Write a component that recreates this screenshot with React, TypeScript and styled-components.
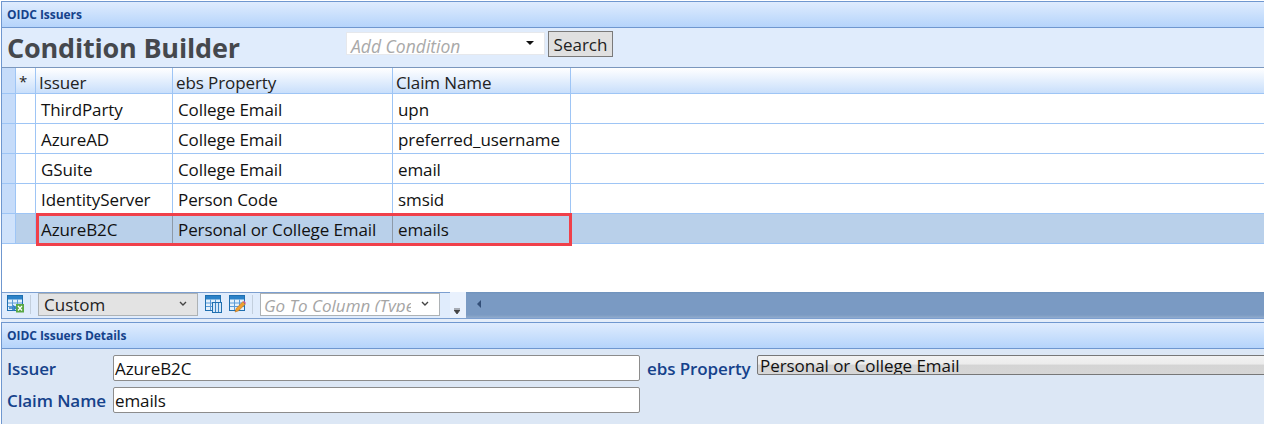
import React from "react";
import styled, { createGlobalStyle } from "styled-components";

const Global = createGlobalStyle`
  html, body { margin: 0; padding: 0; background: #fff; overflow: hidden; }
  * { box-sizing: border-box; }
  body { font-family: "Open Sans", "Noto Sans", sans-serif; }
`;

const Page = styled.div`
  width: 1264px;
  height: 424px;
  padding: 1px 0 0 1px;
  display: flex;
  flex-direction: column;
  overflow: hidden;
  background: #fff;
`;

const Upper = styled.section`
  height: 318px;
  flex: none;
  display: flex;
  flex-direction: column;
  border-top: 1px solid #6f97cf;
  border-left: 1px solid #6f97cf;
`;

const TitleBar = styled.div`
  height: 26px;
  flex: none;
  padding: 0 0 0 5px;
  display: flex;
  align-items: center;
  background: linear-gradient(#dfecfe, #b5d4fb);
  border-bottom: 1px solid #6f97cf;
  color: #15428b;
  font-size: 12px;
  font-weight: 700;
  letter-spacing: -0.05px;
`;

const BuilderBar = styled.div`
  height: 40px;
  flex: none;
  display: flex;
  align-items: flex-start;
  background: #e0ecfc;
  border-bottom: 1px solid #7b97bd;
`;

const BuilderTitle = styled.h1`
  width: 338px;
  margin: 0;
  padding: 2px 0 0 5px;
  color: #45484d;
  font-size: 27px;
  line-height: 36px;
  font-weight: 700;
  letter-spacing: -0.2px;
`;

const ConditionSelect = styled.div`
  width: 199px;
  height: 23px;
  margin: 4px 0 0 6px;
  padding: 0 0 0 4px;
  display: flex;
  justify-content: space-between;
  background: #fff;
  border: 1px solid #e6e8ec;
  color: #a9a9a9;
  font-size: 17.5px;
  font-style: italic;
  line-height: 27px;
  overflow: hidden;
`;

const Caret = styled.span`
  width: 0;
  height: 0;
  margin: 8px 10px 0 0;
  border-left: 4px solid transparent;
  border-right: 4px solid transparent;
  border-top: 4px solid #111;
`;

const SearchButton = styled.button`
  width: 65px;
  height: 26px;
  margin: 3px 0 0 3px;
  padding: 0;
  background: #e0e0e0;
  border: 1px solid #7a7a7a;
  color: #222;
  font-family: inherit;
  font-size: 17px;
  line-height: 23px;
`;

const Row = styled.div<{ $selected?: boolean }>`
  position: relative;
  height: 30px;
  flex: none;
  display: grid;
  grid-template-columns: 14px 20px 137px 220px 178px 1fr;
  border-bottom: 1px solid #9ec5f5;
  background: ${(p) => (p.$selected ? "#b9d0ea" : "#fff")};
`;

const HeaderRow = styled(Row)`
  height: 26px;
  background: linear-gradient(#fff, #c9dffb);
`;

const Cell = styled.div<{ $line?: boolean; $dark?: boolean }>`
  padding: 0 0 0 5px;
  border-right: 1px solid ${(p) => (p.$line === false ? "transparent" : p.$dark ? "#8d9aa8" : "#9ec5f5")};
  color: #111;
  font-size: 17px;
  line-height: 32px;
  letter-spacing: -0.1px;
  white-space: nowrap;
  overflow: hidden;
`;

const HeaderCell = styled(Cell)`
  padding-left: 3px;
  color: #222;
  line-height: 30px;
`;

const Star = styled(HeaderCell)`
  padding: 0 5px 0 0;
  text-align: center;
  font-size: 15px;
  line-height: 26px;
`;

const Indicator = styled.div<{ $selected?: boolean }>`
  border-right: 1px solid #9ec5f5;
  background: ${(p) => (p.$selected ? "#cfe2fb" : "#c6dcfa")};
`;

const StateCell = styled.div<{ $selected?: boolean }>`
  border-right: 1px solid #9ec5f5;
  background: ${(p) => (p.$selected ? "#b9d0ea" : "#fff")};
`;

const Highlight = styled.div`
  position: absolute;
  left: 34px;
  top: -1px;
  width: 536px;
  height: 33px;
  border: 3px solid #f0404a;
  pointer-events: none;
`;

const GridFill = styled.div`
  flex: 1;
  background: #fff;
`;

const Toolbar = styled.div`
  height: 27px;
  flex: none;
  display: flex;
  align-items: flex-start;
  background: #e0ecfc;
  border-top: 1px solid #7c9fd0;
  border-bottom: 1px solid #7c9fd0;
`;

const ToolIcon = styled.svg<{ $left: number }>`
  flex: none;
  width: 17px;
  height: 18px;
  margin: 2px 0 0 ${(p) => p.$left}px;
`;

const Separator = styled.span<{ $left: number }>`
  flex: none;
  width: 1px;
  height: 19px;
  margin: 2px 0 0 ${(p) => p.$left}px;
  background: #c3cfdd;
`;

const ViewSelect = styled.div`
  flex: none;
  width: 160px;
  height: 23px;
  margin: 0 0 0 7px;
  padding-left: 5px;
  display: flex;
  justify-content: space-between;
  background: #e3e3e3;
  border: 1px solid #adb2b5;
  color: #222;
  font-size: 17px;
  line-height: 22px;
`;

const Chevron = styled.svg`
  flex: none;
  width: 8px;
  height: 6px;
  margin: 7px 10px 0 0;
`;

const ColumnSelect = styled.div`
  flex: none;
  width: 180px;
  height: 23px;
  margin: 0 0 0 7px;
  padding-left: 3px;
  display: flex;
  justify-content: space-between;
  background: #fff;
  border: 1px solid #adb2b5;
  color: #a5a5a5;
  font-size: 17px;
  font-style: italic;
  line-height: 23px;
  white-space: nowrap;
`;

const ColumnText = styled.span`
  width: 147px;
  height: 18px;
  overflow: hidden;
`;

const Overflow = styled.div`
  flex: none;
  width: 16px;
  height: 26px;
  margin: -1px 0 0 10px;
  background: #e9f1fd;
  display: flex;
  justify-content: center;
`;

const OverflowGlyph = styled.svg`
  width: 6px;
  height: 7px;
  margin: 16px 3px 0 0;
`;

const Scroll = styled.div`
  flex: 1;
  height: 26px;
  margin-top: -1px;
  display: flex;
  background: linear-gradient(#6f92bc 0, #7a9ac3 8%, #7a9ac3 88%, #92acce 100%);
`;

const ScrollArrow = styled.span`
  width: 0;
  height: 0;
  margin: 8px 0 0 11px;
  border-top: 4px solid transparent;
  border-bottom: 4px solid transparent;
  border-right: 4px solid #334f78;
`;

const Gutter = styled.div`
  height: 3px;
  flex: none;
  background: #e4edf9;
`;

const Lower = styled.section`
  flex: 1;
  display: flex;
  flex-direction: column;
  background: #dce7f5;
  border-top: 1px solid #6f97cf;
  border-left: 1px solid #6f97cf;
`;

const Form = styled.div`
  display: grid;
  grid-template-columns: 106px 527px 117px 1fr;
  grid-template-rows: 26px 26px;
  row-gap: 6px;
  padding: 6px 0 0 5px;
`;

const Label = styled.label`
  color: #15428b;
  font-size: 17px;
  font-weight: 600;
  line-height: 27px;
  letter-spacing: -0.1px;
  white-space: nowrap;
`;

const PropertyLabel = styled(Label)`
  padding-left: 7px;
`;

const TextBox = styled.div`
  height: 26px;
  padding-left: 1px;
  background: #fff;
  border: 1px solid #8c8c8c;
  border-radius: 2px;
  color: #111;
  font-size: 17px;
  line-height: 25px;
  letter-spacing: -0.1px;
`;

const PropertySelect = styled.div`
  width: 520px;
  height: 20px;
  padding-left: 2px;
  background: linear-gradient(#f2f2f2 0, #ececec 45%, #d4d4d4 50%, #d6d6d6 100%);
  border: 1px solid #777;
  border-radius: 2px;
  color: #111;
  font-size: 17px;
  line-height: 19px;
  letter-spacing: -0.05px;
  overflow: hidden;
`;

function GridGlyph() {
  return (
    <>
      <rect x="0.5" y="0.5" width="15" height="15" fill="#e4f0fb" stroke="#1f6fb0" />
      <rect x="1" y="1" width="14" height="3.5" fill="#2b82c9" />
      <path d="M5.5 4.5V15M10.5 4.5V15M1 8H15M1 11.5H15" stroke="#5a9bd8" />
    </>
  );
}

const rows = [
  ["ThirdParty", "College Email", "upn"],
  ["AzureAD", "College Email", "preferred_username"],
  ["GSuite", "College Email", "email"],
  ["IdentityServer", "Person Code", "smsid"],
];

export default function App() {
  return (
    <Page>
      <Global />
      <Upper>
        <TitleBar>OIDC Issuers</TitleBar>
        <BuilderBar>
          <BuilderTitle>Condition Builder</BuilderTitle>
          <ConditionSelect>
            Add Condition
            <Caret />
          </ConditionSelect>
          <SearchButton>Search</SearchButton>
        </BuilderBar>
        <HeaderRow>
          <Indicator />
          <Star>*</Star>
          <HeaderCell>Issuer</HeaderCell>
          <HeaderCell>ebs Property</HeaderCell>
          <HeaderCell>Claim Name</HeaderCell>
          <HeaderCell $line={false} />
        </HeaderRow>
        {rows.map((r) => (
          <Row key={r[0]}>
            <Indicator />
            <StateCell />
            <Cell>{r[0]}</Cell>
            <Cell>{r[1]}</Cell>
            <Cell>{r[2]}</Cell>
            <Cell $line={false} />
          </Row>
        ))}
        <Row $selected>
          <Indicator $selected />
          <StateCell $selected />
          <Cell $dark>AzureB2C</Cell>
          <Cell $dark>Personal or College Email</Cell>
          <Cell $line={false}>emails</Cell>
          <Cell $line={false} />
          <Highlight />
        </Row>
        <GridFill />
        <Toolbar>
          <ToolIcon $left={5} viewBox="0 0 17 18">
            <GridGlyph />
            <rect x="9" y="9" width="8" height="8.5" fill="#5aa845" />
            <path d="M11 11l4 4.5M15 11l-4 4.5" stroke="#fff" strokeWidth="1.2" />
            <path d="M2 13h6M6 10.5l2.5 2.5L6 15.5" stroke="#2f7fc4" strokeWidth="1.6" fill="none" />
          </ToolIcon>
          <Separator $left={6} />
          <ViewSelect>
            Custom
            <Chevron viewBox="0 0 8 6">
              <path d="M1 1l3 3 3-3" stroke="#444" strokeWidth="1.4" fill="none" />
            </Chevron>
          </ViewSelect>
          <ToolIcon $left={7} viewBox="0 0 17 18">
            <GridGlyph />
            <rect x="7.5" y="7.5" width="9" height="10" fill="#d5e8fa" stroke="#1f6fb0" />
            <path d="M10.5 8v9M13.5 8v9" stroke="#3f86c4" />
          </ToolIcon>
          <ToolIcon $left={7} viewBox="0 0 17 18">
            <GridGlyph />
            <path d="M6 17l1.2-3.6 6.6-6.6 2.4 2.4-6.6 6.6z" fill="#f0a030" stroke="#b96f1b" strokeWidth="0.6" />
            <path d="M14 6.5l2.4 2.4 0.6-1-2-2.2z" fill="#d9569a" />
          </ToolIcon>
          <Separator $left={6} />
          <ColumnSelect>
            <ColumnText>Go To Column (Type</ColumnText>
            <Chevron viewBox="0 0 8 6">
              <path d="M1 1l3 3 3-3" stroke="#444" strokeWidth="1.4" fill="none" />
            </Chevron>
          </ColumnSelect>
          <Overflow>
            <OverflowGlyph viewBox="0 0 6 7">
              <path d="M0 0h6M0 2h6L3 6z" stroke="#444" strokeWidth="0.8" fill="#444" />
            </OverflowGlyph>
          </Overflow>
          <Scroll>
            <ScrollArrow />
          </Scroll>
        </Toolbar>
      </Upper>
      <Gutter />
      <Lower>
        <TitleBar>OIDC Issuers Details</TitleBar>
        <Form>
          <Label>Issuer</Label>
          <TextBox>AzureB2C</TextBox>
          <PropertyLabel>ebs Property</PropertyLabel>
          <PropertySelect>Personal or College Email</PropertySelect>
          <Label>Claim Name</Label>
          <TextBox>emails</TextBox>
        </Form>
      </Lower>
    </Page>
  );
}
